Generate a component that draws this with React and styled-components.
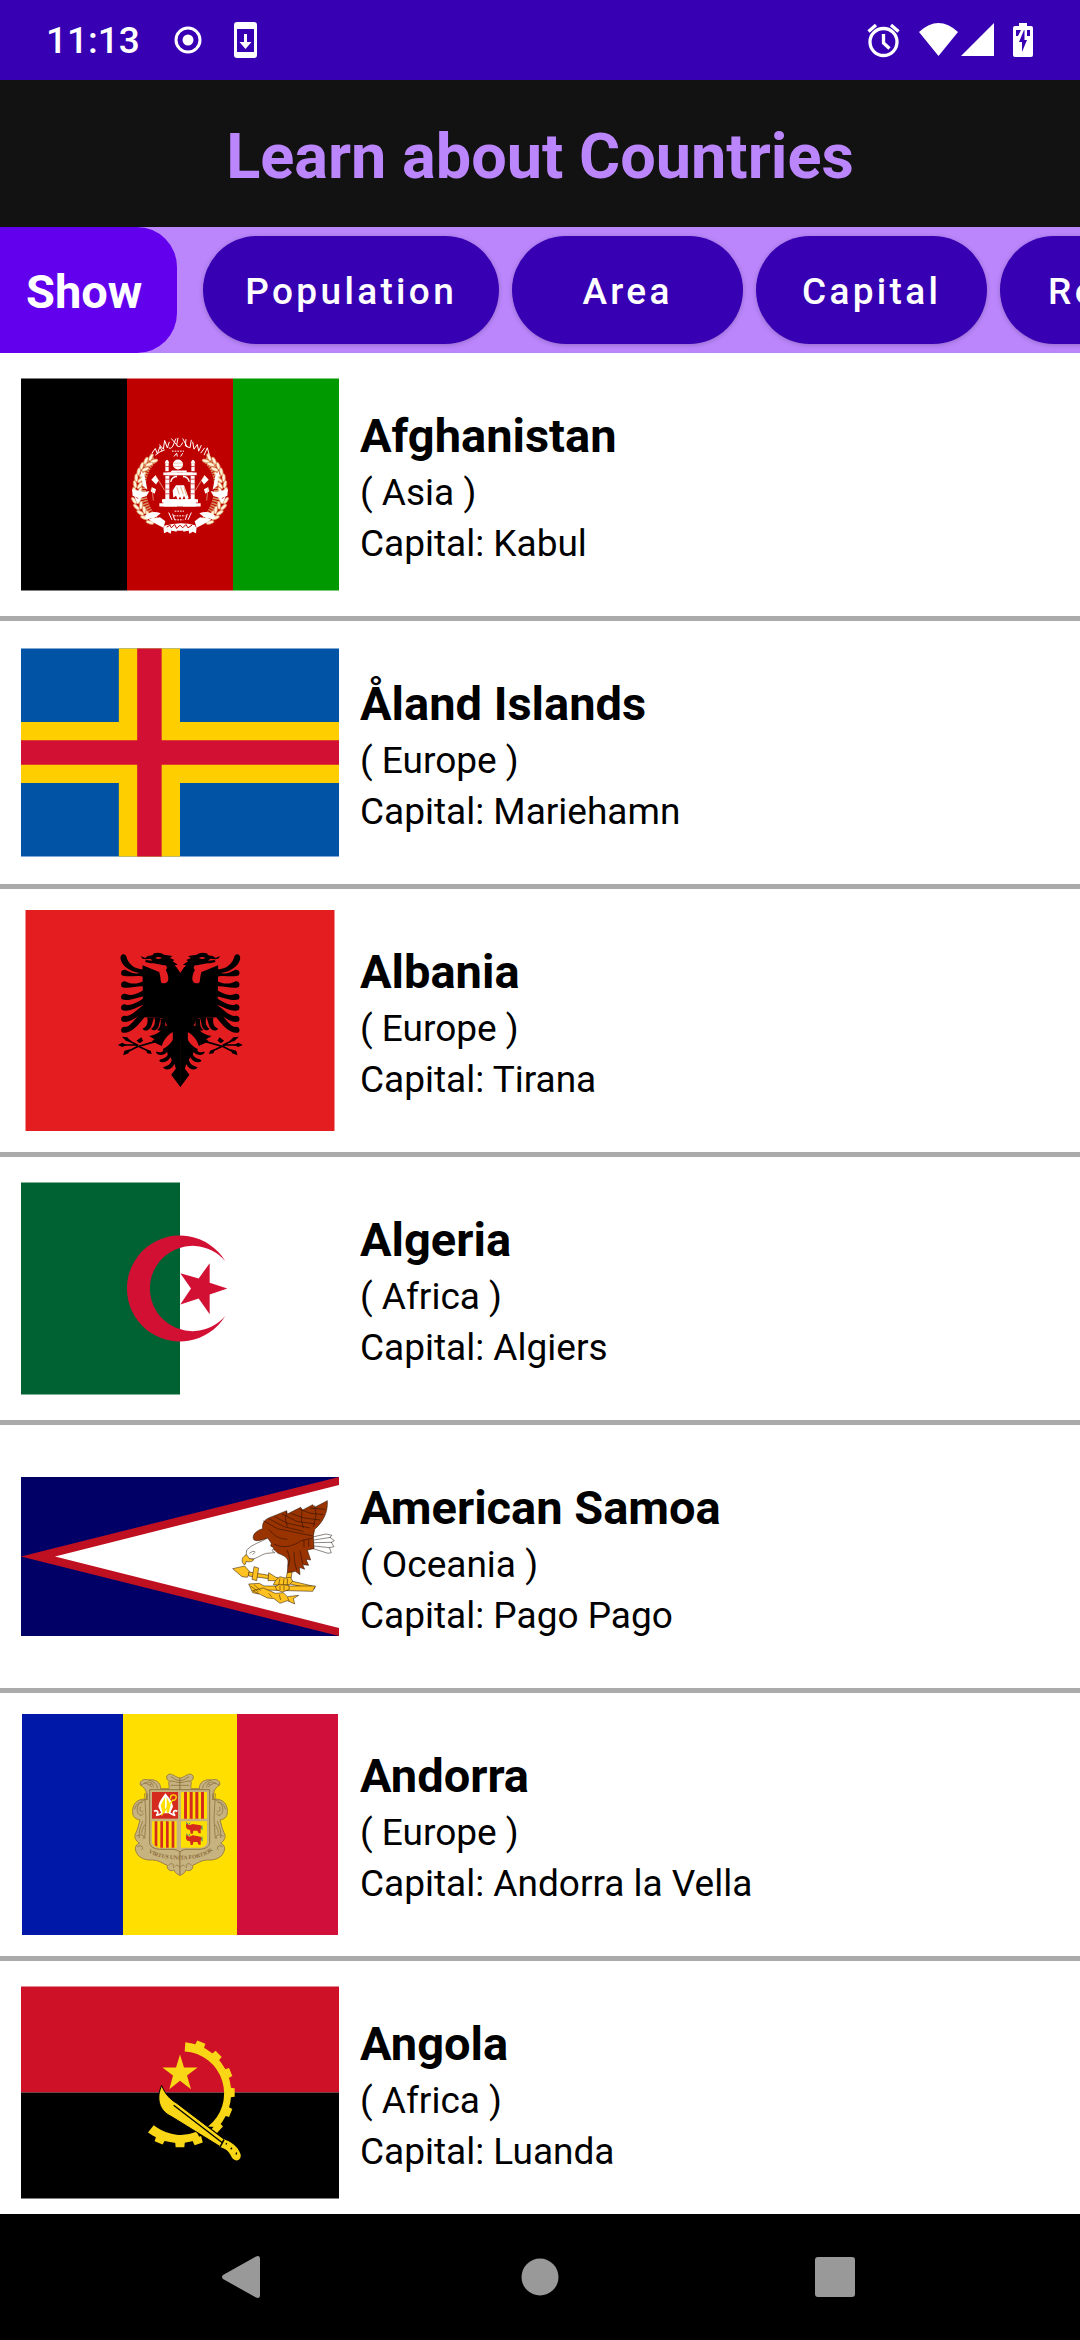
import React from "react";
import styled, { createGlobalStyle } from "styled-components";

const GlobalStyle = createGlobalStyle`
  * { box-sizing: border-box; }
  body {
    margin: 0;
    background: #ffffff;
    color: #000000;
    font-family: Roboto, "Noto Sans", sans-serif;
  }
  button {
    border: 0;
    padding: 0;
    background: none;
    color: inherit;
    font-family: inherit;
    cursor: pointer;
  }
`;

const Screen = styled.div`
  display: flex;
  flex-direction: column;
  height: 100vh;
  overflow: hidden;
`;

const StatusBar = styled.div`
  display: flex;
  align-items: center;
  justify-content: space-between;
  flex: none;
  height: 80px;
  padding: 0 47px 0 46px;
  background: #3700b3;
  color: #ffffff;
`;

const StatusGroup = styled.div`
  display: flex;
  align-items: center;
  gap: ${(p) => p.$gap}px;
`;

const Clock = styled.time`
  margin-right: 8px;
  padding-top: 2px;
  font-size: 37px;
  line-height: 44px;
  font-weight: 500;
`;

const Glyph = styled.svg`
  display: block;
  flex: none;
  width: ${(p) => p.$w}px;
  height: ${(p) => p.$h}px;
`;

const Header = styled.header`
  flex: none;
  padding: 40px 20px 33px;
  background: #121212;
  text-align: center;
`;

const Title = styled.h1`
  margin: 0;
  color: #bb86fc;
  font-size: 63px;
  line-height: 74px;
  font-weight: 700;
`;

const FilterBar = styled.div`
  display: flex;
  align-items: stretch;
  flex: none;
  height: 126px;
  background: #bb86fc;
`;

const ShowLabel = styled.div`
  display: flex;
  align-items: center;
  flex: none;
  padding: 4px 35px 0 26px;
  border-radius: 0 40px 40px 0;
  background: #6200ee;
  color: #ffffff;
  font-size: 47px;
  line-height: 56px;
  font-weight: 700;
`;

const Filters = styled.nav`
  display: flex;
  align-items: center;
  gap: 13px;
  flex: 1;
  min-width: 0;
  padding-left: 26px;
  overflow: hidden;
`;

const Pill = styled.button`
  && {
    flex: none;
    min-width: 231px;
    height: 108px;
    padding: 3px 42px 0;
    border-radius: 54px;
    background: #3700b3;
    color: #ffffff;
    box-shadow: 0 1px 5px rgba(0, 0, 0, 0.22);
    font-size: 37px;
    line-height: 44px;
    font-weight: 500;
    letter-spacing: 0.09em;
  }
`;

const CountryList = styled.ul`
  flex: 1;
  min-height: 0;
  margin: 0;
  padding: 0;
  overflow: hidden;
  list-style: none;
`;

const CountryRow = styled.li`
  display: flex;
  align-items: center;
  gap: 21px;
  padding: 21px;
  border-bottom: 5px solid #aaaaaa;
`;

const FlagFrame = styled.svg`
  display: block;
  flex: none;
  width: 318px;
  height: 221px;
`;

const Details = styled.div`
  min-width: 0;
  padding-top: 5px;
`;

const Name = styled.h2`
  margin: 0;
  font-size: 47px;
  line-height: 62px;
  font-weight: 700;
`;

const Line = styled.p`
  margin: 0;
  font-size: 37px;
  line-height: 51px;
`;

const NavBar = styled.nav`
  display: grid;
  grid-template-columns: repeat(3, 295px);
  justify-content: center;
  flex: none;
  height: 126px;
  background: #000000;
`;

const NavButton = styled.button`
  display: grid;
  place-items: center;
`;

const MotifText = styled.text`
  font-family: "Liberation Serif", serif;
  font-size: 17px;
  font-weight: 700;
  fill: #8a6a3c;
`;

/* ---------- flags ---------- */

const Motif = ({ x, y, children }) => (
  <g transform={`translate(${x} ${y}) scale(0.33333)`}>{children}</g>
);

function AfghanHalf() {
  const grains = [
    [130, 114, -50], [115, 124, -48], [103, 139, -42], [94, 155, -35], [87, 172, -25],
    [83, 190, -12], [82, 208, 0], [79, 236, 10], [85, 254, 22], [95, 270, 34],
    [106, 284, 44], [122, 298, 50],
  ];
  return (
    <g>
      <path d="M134 116C86 152 82 240 134 298" fill="none" stroke="#d98a5a" strokeWidth="22" strokeDasharray="5 3" />
      {grains.map(([cx, cy, a]) => (
        <g key={cy} transform={`translate(${cx} ${cy}) rotate(${-a})`} fill="#fff3dc" stroke="#d9854d" strokeWidth="2">
          <ellipse cx="-8" rx="5" ry="12" transform="rotate(-24)" />
          <ellipse cx="8" rx="5" ry="12" transform="rotate(24)" />
        </g>
      ))}
      <g fill="#fff">
        <path d="M92 150L104 166L112 208L98 196Z" />
        <path d="M66 206L100 214L118 212L110 226L88 234L68 226Z" />
        <path d="M72 226L84 236L96 232L82 250Z" />
        <path d="M104 286C120 272 136 272 152 278L138 290L112 296Z" />
        <path d="M116 296L150 290L166 302L160 322L126 304Z" />
        <path d="M160 318L200 322L200 334L184 330L182 340L172 334L162 338Z" />
        <path d="M136 164L146 180L138 192L124 178Z" />
        <path d="M126 200L138 206L134 220L122 212Z" />
        <path d="M166 128H176V152H166Z" />
        <path d="M164 128Q171 108 178 128Z" />
        <path d="M160 156H201V164H160Z" />
        <path d="M166 166H178V244H166Z" />
        <path d="M156 236H201V246H156ZM148 248H201V258H148Z" />
      </g>
      <path d="M136 164L164 210M126 200L130 240" fill="none" stroke="#f3c9a8" strokeWidth="2" />
      <path d="M166 138H178M166 176H178M166 190H178M166 206H178M166 220H178" stroke="#bf0000" strokeWidth="2" />
      <path d="M182 184Q186 168 201 168" fill="none" stroke="#fff" strokeWidth="4" />
      <path d="M176 276L186 298M188 280L194 298" stroke="#fff" strokeWidth="3" />
    </g>
  );
}

const Afghanistan = () => (
  <FlagFrame viewBox="0 0 318 212" role="img" aria-label="Flag of Afghanistan">
    <path fill="#000" d="M0 0H106V212H0Z" />
    <path fill="#bf0000" d="M106 0H212V212H106Z" />
    <path fill="#009900" d="M212 0H318V212H212Z" />
    <Motif x={89} y={42}>
      <AfghanHalf />
      <g transform="translate(420 0) scale(-1 1)"><AfghanHalf /></g>
      <path fill="#fff" d="M172 156H248V164H172ZM160 236H258V258H160Z" />
      <circle cx="204" cy="132" r="15" fill="#fff" />
      <path d="M190 138H218M192 128H216" stroke="#e8b48c" strokeWidth="2" />
      <path d="M186 150H230V156H180Z" fill="#fff" />
      <path d="M190 232L188 210L198 194H222L236 232L228 240L222 226L216 240L210 228L204 240L198 226Z" fill="#fff" />
      <path d="M200 200L208 222M212 198L220 222M222 200L230 226" stroke="#d68c50" strokeWidth="2" />
      <g fill="none" stroke="#fff" strokeWidth="3">
        <path d="M126 98L136 84L142 100L150 78L156 92M136 104L150 94L164 88" />
        <path d="M148 72L160 86L164 60L172 82L178 64M176 82Q186 88 192 68L198 54M184 54L204 78" />
        <path d="M204 52L200 74Q210 86 218 66M218 54L232 80M228 56L226 76L240 82L244 58" />
        <path d="M248 64L252 86L262 72L266 92L274 74M272 98L284 82M282 104L292 82L298 104" />
        <path d="M186 92H222" strokeDasharray="5 3" />
        <path d="M192 108L200 98L202 108M212 108L218 98" />
        <path d="M194 272H222M192 286H226M194 298H220" strokeDasharray="5 3" />
      </g>
      <path d="M162 316Q210 302 256 314L254 326Q210 336 164 326Z" fill="#fff" />
      <path d="M170 320L180 314L184 322L194 312L200 324L210 314L218 322L228 312L234 322L246 314" fill="none" stroke="#bf0000" strokeWidth="3" />
    </Motif>
  </FlagFrame>
);

const Aland = () => (
  <FlagFrame viewBox="0 0 52 34" role="img" aria-label="Flag of the Åland Islands">
    <path fill="#0053a5" d="M0 0H52V34H0Z" />
    <path fill="#ffce00" d="M16 0H26V34H16ZM0 12H52V22H0Z" />
    <path fill="#d21034" d="M19 0H23V34H19ZM0 15H52V19H0Z" />
  </FlagFrame>
);

const feathers = [
  [128, 134, 0], [163, 162, 4], [200, 190, 6], [232, 214, 12], [266, 234, 20], [299, 250, 26],
];

const EagleHalf = () => (
  <g>
    <path d="M132 118C104 120 82 102 77 78C72 68 58 72 60 86C64 110 96 130 132 130Z" />
    {feathers.map(([tip, root, rise]) => (
      <path
        key={tip}
        d={`M134 ${root - 12}C112 ${root + 2} 94 ${tip + 2 - rise / 2} 76 ${tip - 8}C66 ${tip - 12} 58 ${tip - 2} 64 ${tip + 8}C84 ${tip + 16} 112 ${tip + 4 - rise / 2} 134 ${root + 8}Z`}
      />
    ))}
    {/* shoulder, flank and half of the breast */}
    <path d="M240 130L262 160V330H240L222 304C206 300 196 286 192 268L180 264L128 262L126 106L176 126C184 150 176 160 190 160C208 160 206 140 196 120L206 104L228 112Z" />
    <path d="M196 96C212 112 206 136 208 150L240 150V130L228 116L220 100Z" />
    {/* head with crest and open beak */}
    <path d="M120 78L134 84L142 78L156 76L160 70C172 66 184 68 190 74L216 78L208 84L222 90L216 94L232 104L222 106L230 116L206 126L196 106C180 106 170 100 150 100L134 96L136 90L156 92L150 86L136 88L126 86Z" />
    <path d="M164 84Q174 78 184 84Q174 90 164 84Z" fill="#e41e20" />
    {/* thigh feathers */}
    <path d="M140 262C144 280 138 292 126 296C132 306 150 302 154 284L160 264ZM162 264C166 280 160 292 152 296C160 306 174 300 176 282L180 264ZM180 266C182 284 178 294 170 300C180 306 190 300 194 284L194 266Z" />
    <path d="M190 286C186 304 166 316 146 318L162 328L154 334L184 348C190 326 208 310 222 304L212 290Z" />
    {/* talons */}
    <g fill="none" stroke="#000" strokeWidth="5">
      <path d="M166 334L110 350L72 370M60 345H106L150 366M76 328L112 346" />
    </g>
    <path d="M52 345L66 338L78 345L66 351ZM64 320L80 322L92 334L78 334ZM68 376L72 362L88 358L84 370ZM108 332L122 322L128 332L118 340ZM136 358L150 362L154 372L140 370Z" />
    {/* tail */}
    <path d="M221 304C230 320 204 352 188 356L188 362C180 372 170 362 166 366C170 378 190 378 200 366L202 374C192 390 180 384 176 392C184 402 202 396 210 382L214 390C208 408 198 406 188 412C192 422 212 422 222 402L226 416L212 434L240 472V300Z" />
  </g>
);

const Albania = () => (
  <FlagFrame viewBox="0 0 309 221" role="img" aria-label="Flag of Albania">
    <path fill="#e41e20" d="M0 0H309V221H0Z" />
    <Motif x={75} y={20}>
      <EagleHalf />
      <g transform="translate(479 0) scale(-1 1)"><EagleHalf /></g>
    </Motif>
  </FlagFrame>
);

const Algeria = () => (
  <FlagFrame viewBox="0 0 318 212" role="img" aria-label="Flag of Algeria">
    <path fill="#fff" d="M0 0H318V212H0Z" />
    <path fill="#006233" d="M0 0H159V212H0Z" />
    <Motif x={-21} y={-22}>
      <path fill="#d21034" d="M676 302A159 159 0 1 0 676 466A128 128 0 1 1 676 302Z" />
      <path fill="#d21034" d="M682 384L629 367V308L596 354L541 338L573 384L541 432L596 414L629 461V402Z" />
    </Motif>
  </FlagFrame>
);

const AmericanSamoa = () => (
  <FlagFrame viewBox="0 0 318 159" role="img" aria-label="Flag of American Samoa">
    <path fill="#000066" d="M0 0H318V159H0Z" />
    <path fill="#bf1022" d="M0 79.500L318 0V159Z" />
    <path fill="#fff" d="M34 79.500L318 8V151Z" />
    <Motif x={179} y={-17}>
      <g stroke="#1a0a00" strokeWidth="1.500" strokeLinejoin="round">
        <path fill="#fff" d="M338 231L378 222L396 226L390 232L403 242L394 247L402 260L388 263L394 278L384 280L340 266Z" />
        <path fill="none" d="M342 240L392 232M342 248L396 247M342 258L388 263" />
        <path fill="#993300" d="M188 206C186 190 192 180 206 174L260 152L262 162L302 142L308 150L338 134L344 142L382 122C384 152 374 182 344 208L340 228L342 266L322 270L332 300L318 298L326 316L308 314L314 328L298 322L300 344L286 334L262 340L264 306C264 292 250 286 234 280L214 262L202 236C190 236 176 246 162 240C154 228 166 212 188 206Z" />
        <path fill="#fff" d="M140 270C156 252 180 248 203 234L214 250L212 258L222 264L216 272L224 278L200 280C180 284 166 302 146 296L138 288Z" />
        <path fill="#ffc221" d="M140 284C126 290 122 302 132 314L137 312L138 304C150 308 160 304 162 298L148 296Z" />
        <path fill="none" d="M148 280L158 274L166 276M158 284L164 278" />
        <path fill="none" d="M190 182L232 206L290 218L340 228M206 176L252 200L310 214M224 170L262 190L330 204M246 162L290 184L346 192M272 160L312 174L360 180M300 148L332 160L370 164M330 144L376 148M260 154L256 176L262 200M306 150L304 180L310 204M344 136L348 166L340 200" />
        <path fill="none" d="M206 208C226 230 236 236 262 238M222 252C250 268 280 258 304 242L338 234M262 270L270 300L264 320M282 276L284 306L290 330M300 272L308 310M312 240V262M326 238V260" />
        <path fill="#ffc221" d="M262 338L276 336L274 352L268 362H256Z" />
        <path fill="#ffc221" d="M98 326L134 318L150 336L142 352L126 350Z" />
        <path fill="#ffc221" d="M146 336L208 346L206 356L146 348Z" />
        <path fill="#ffc221" d="M162 320L176 324L170 362L156 358Z" />
        <path fill="#ffc221" d="M206 338L228 352L346 380L342 388L224 362L204 362Z" />
        <path fill="#ffc221" d="M146 372L178 370L192 378L346 378L338 394L190 390L176 402L158 398Z" />
        <path fill="#ffc221" d="M158 392L190 384L226 400L250 398L262 410L296 406L280 416L284 432L262 422L240 430L222 416L202 414Z" />
        <path fill="#ffc221" d="M226 362L240 350L256 354L272 352L278 364L268 374L240 376L220 374Z" />
        <path fill="#ffc221" d="M226 380L236 374L266 376L268 388L248 396L230 390Z" />
        <path fill="none" d="M240 356L236 374M252 356L250 374M262 356L262 374M240 378V390M252 378V392M206 400L216 412M238 404L242 420M262 412L268 424M152 378L176 396M162 374L182 392" />
      </g>
    </Motif>
  </FlagFrame>
);

const ScrollHalf = () => (
  <g fill="#c7b37f" stroke="#8f7444" strokeWidth="2.500">
    <path d="M210 84C196 82 188 70 176 73C166 78 170 90 178 94C172 104 182 108 176 116L152 116C152 98 138 86 116 90C98 84 86 96 92 106C100 110 104 116 108 124L110 148C88 144 68 158 68 182C66 196 74 208 90 210C86 222 84 236 78 248C70 262 78 272 88 280C74 284 74 300 80 308C84 322 106 332 128 330C146 330 156 340 172 346C170 358 180 366 192 360C196 370 204 374 210 376Z" />
    <path fill="none" d="M110 148C88 152 80 166 82 184C84 196 96 200 100 190M74 178C78 162 86 156 98 158M92 106C104 96 116 100 126 112M116 90C134 96 142 104 142 116M102 100C112 94 120 96 128 102M98 214C92 232 86 242 88 256C96 252 104 256 100 266M104 224C96 240 94 246 96 250M82 290C96 284 100 290 96 300M178 94C190 90 196 98 210 98M182 80C192 84 198 92 210 92M182 106H210M176 346C184 334 196 346 190 354M196 348C202 342 206 350 210 352M92 170C86 182 94 190 100 182M118 106C124 98 132 104 130 112" />
    <path fill="none" d="M104 130L108 206L104 266M112 130V150M80 258C86 254 90 258 88 264" />
  </g>
);

const Cow = () => (
  <g fill="#d52b1e">
    <path d="M228 220L238 226L248 222L272 226L276 232L272 238V250H266L262 242L250 242L248 251H242L240 240L232 238L228 232Z" />
    <path d="M228 217L234 222M240 218L236 224M276 226V240" fill="none" stroke="#16829a" strokeWidth="2.500" />
  </g>
);

const Andorra = () => (
  <FlagFrame viewBox="0 0 316 221" role="img" aria-label="Flag of Andorra">
    <path fill="#0018a8" d="M0 0H101V221H0Z" />
    <path fill="#fedf00" d="M101 0H215V221H101Z" />
    <path fill="#d0103a" d="M215 0H316V221H215Z" />
    <Motif x={88} y={36}>
      <ScrollHalf />
      <g transform="translate(420 0) scale(-1 1)"><ScrollHalf /></g>
      <path d="M119 119H299V280Q296 296 270 298H226Q214 300 210 306Q204 300 192 298H148Q122 296 119 280Z" fill="#c7b37f" stroke="#8f7444" strokeWidth="3" />
      <path fill="#d52b1e" d="M126 126H204V206H126Z" />
      <path fill="#fedf00" d="M213 126H291V206H213ZM126 214H200V293H148Q128 292 126 276ZM213 214H291V276Q290 292 270 293H213Z" />
      <path fill="#d52b1e" d="M222 126H231V206H222ZM239 126H248V206H239ZM256 126H265V206H256ZM273 126H282V206H273ZM134 214H142V290L134 286ZM151 214H159V293H151ZM168 214H176V293H168ZM185 214H193V293H185Z" />
      <path fill="#fff" d="M145 170C148 152 158 142 166 130C176 142 186 152 189 170L180 190H154Z" />
      <path fill="#fedf00" d="M152 166L165 142V188H158ZM182 166L170 142V188H176Z" />
      <path d="M132 184C140 178 148 186 140 196M202 184C194 178 186 186 194 196M138 196C150 196 154 190 158 188M196 196C186 196 182 190 178 188" fill="none" stroke="#fff" strokeWidth="5" />
      <path d="M182 146C178 134 192 132 198 138C202 148 192 152 188 150L154 196" fill="none" stroke="#fedf00" strokeWidth="4" />
      <Cow />
      <g transform="translate(0 34)"><Cow /></g>
      <path id="motto-path" d="M112 304C150 336 270 338 308 302" fill="none" />
      <MotifText><textPath href="#motto-path" startOffset="4">VIRTUS UNITA FORTIOR</textPath></MotifText>
    </Motif>
  </FlagFrame>
);

const teeth = [-67, -45, -22, 0, 22, 43, 70, 90, 113];

const Angola = () => (
  <FlagFrame viewBox="0 0 318 212" role="img" aria-label="Flag of Angola">
    <path fill="#ce1126" d="M0 0H318V106H0Z" />
    <path fill="#000" d="M0 106H318V212H0Z" />
    <Motif x={109} y={34}>
      <g fill="#f9d616">
        <path d="M166 65A153 153 0 0 1 264 320L234 318A126 126 0 0 0 164 93Z" />
        <path d="M210 354A152 152 0 0 1 68 345L54 336L71 314L82 322A126 126 0 0 0 200 334Z" />
        {teeth.map((a) => (
          <path key={a} transform={`rotate(${a} 150 216)`} d="M294 201L314 203V229L294 231Z" />
        ))}
        <path d="M150 102L162 141H203L171 165L183 206L150 181L118 206L129 165L97 141H138Z" />
        <path stroke="#000" strokeWidth="3" d="M95 195C106 222 120 236 140 248L282 356L270 378L124 288C86 270 78 232 95 195Z" />
        <path d="M282 356C300 362 324 376 332 402C334 420 318 426 306 412C298 396 292 386 268 379Z" />
      </g>
      <path d="M131 254L276 366M282 358L270 380" stroke="#000" strokeWidth="4" fill="none" />
      <path d="M288 372L290 368M302 386L306 382M318 402L320 396" stroke="#000" strokeWidth="4" />
    </Motif>
  </FlagFrame>
);

/* ---------- content ---------- */

const filters = ["Population", "Area", "Capital", "Region"];

const countries = [
  { name: "Afghanistan", continent: "Asia", capital: "Kabul", Flag: Afghanistan },
  { name: "Åland Islands", continent: "Europe", capital: "Mariehamn", Flag: Aland },
  { name: "Albania", continent: "Europe", capital: "Tirana", Flag: Albania },
  { name: "Algeria", continent: "Africa", capital: "Algiers", Flag: Algeria },
  { name: "American Samoa", continent: "Oceania", capital: "Pago Pago", Flag: AmericanSamoa },
  { name: "Andorra", continent: "Europe", capital: "Andorra la Vella", Flag: Andorra },
  { name: "Angola", continent: "Africa", capital: "Luanda", Flag: Angola },
];

const Status = () => (
  <StatusBar>
    <StatusGroup $gap={26}>
      <Clock>11:13</Clock>
      <Glyph $w={28} $h={28} viewBox="0 0 28 28" aria-hidden="true">
        <circle cx="14" cy="14" r="12" fill="none" stroke="#fff" strokeWidth="3" />
        <circle cx="14" cy="14" r="5.500" fill="#fff" />
      </Glyph>
      <Glyph $w={36} $h={38} viewBox="0 0 36 38" aria-hidden="true">
        <path fill="#fff" fillRule="evenodd" d="M9 1H26Q29 1 29 4V34Q29 37 26 37H9Q6 37 6 34V4Q6 1 9 1ZM9 8V31H26V8Z" />
        <path fill="#fff" d="M16 13H19V21H23.500L17.500 28L11.500 21H16Z" />
      </Glyph>
    </StatusGroup>
    <StatusGroup $gap={18}>
      <Glyph $w={34} $h={36} viewBox="0 0 34 36" aria-hidden="true">
        <g fill="none" stroke="#fff" strokeWidth="3.300">
          <circle cx="16.500" cy="20" r="13.500" />
          <path d="M16.500 12V21L22.500 26.500M1.500 9.500L9 3M31.500 9.500L24 3" />
        </g>
      </Glyph>
      <Glyph $w={76} $h={36} viewBox="0 0 76 36" aria-hidden="true">
        <path fill="#fff" d="M0 10Q19.500 -8 39 10L19.500 34ZM42 34L75 1V34Z" />
      </Glyph>
      <Glyph $w={20} $h={36} viewBox="0 0 20 36" aria-hidden="true">
        <path fill="#fff" fillRule="evenodd" d="M6 1H14V4H18Q20 4 20 6V33Q20 35 18 35H2Q0 35 0 33V6Q0 4 2 4H6ZM3 8V14H5L8 8ZM11 8L6 20H9V30L14 18H11.500V8ZM14 8V14H17V8Z" />
      </Glyph>
    </StatusGroup>
  </StatusBar>
);

export default function App() {
  return (
    <Screen>
      <GlobalStyle />
      <Status />
      <Header>
        <Title>Learn about Countries</Title>
      </Header>
      <FilterBar>
        <ShowLabel>Show</ShowLabel>
        <Filters aria-label="Details to show">
          {filters.map((label) => (
            <Pill key={label} type="button">{label}</Pill>
          ))}
        </Filters>
      </FilterBar>
      <CountryList>
        {countries.map(({ name, continent, capital, Flag }) => (
          <CountryRow key={name}>
            <Flag />
            <Details>
              <Name>{name}</Name>
              <Line>( {continent} )</Line>
              <Line>Capital: {capital}</Line>
            </Details>
          </CountryRow>
        ))}
      </CountryList>
      <NavBar aria-label="System navigation">
        <NavButton type="button" aria-label="Back">
          <Glyph $w={48} $h={44} viewBox="0 0 48 44" aria-hidden="true">
            <path fill="#999" d="M2 20L35 1.500Q39 0 39 4V40Q39 44 35 42.500L2 24Q0 22 2 20Z" />
          </Glyph>
        </NavButton>
        <NavButton type="button" aria-label="Home">
          <Glyph $w={38} $h={38} viewBox="0 0 38 38" aria-hidden="true">
            <circle cx="19" cy="19" r="18.500" fill="#999" />
          </Glyph>
        </NavButton>
        <NavButton type="button" aria-label="Recent apps">
          <Glyph $w={40} $h={40} viewBox="0 0 40 40" aria-hidden="true">
            <rect width="40" height="40" rx="3" fill="#999" />
          </Glyph>
        </NavButton>
      </NavBar>
    </Screen>
  );
}
